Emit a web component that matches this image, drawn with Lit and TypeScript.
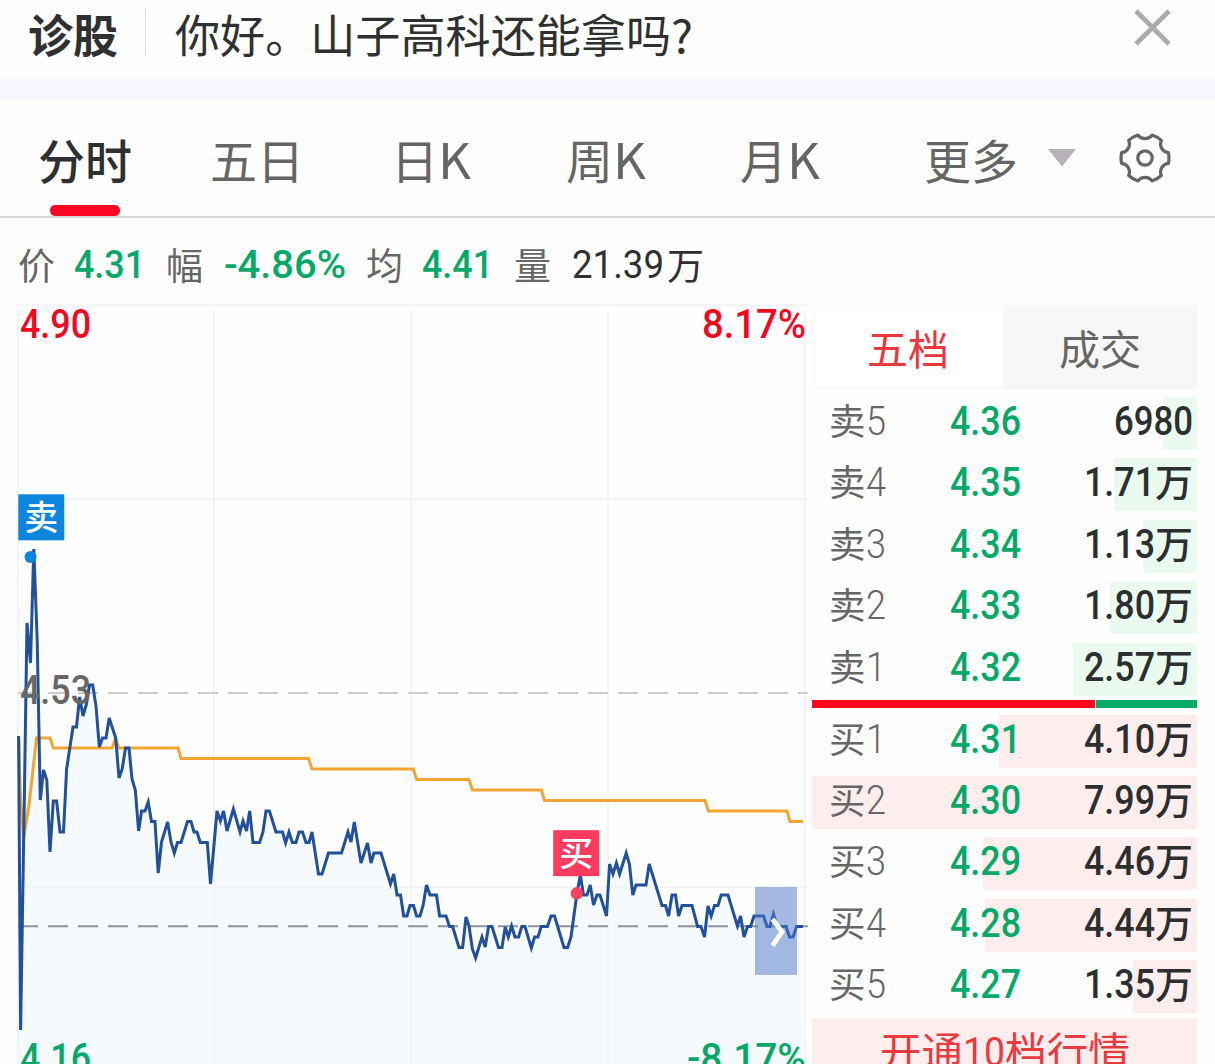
import { LitElement, html, svg, css, nothing } from "lit";
import { customElement, property } from "lit/decorators.js";

/** A single-line run of text fitted to an exact advance width. */
@customElement("fit-text")
class FitText extends LitElement {
  @property() text = "";
  @property({ type: Number }) width = 0;
  @property({ type: Number }) height = 53;
  @property({ type: Number }) base = 38;
  static styles = css`
    :host { display: block; flex: none; font-family: "Roboto", "Noto Sans CJK SC", sans-serif; }
    :host(.latin) { font-family: "Noto Sans CJK SC", sans-serif; }
    svg { display: block; overflow: visible; }
    text { fill: currentColor; white-space: pre; }
  `;
  render() {
    return html`<svg width=${this.width} height=${this.height}>
      <text x="0" y=${this.base} textLength=${this.width} lengthAdjust="spacingAndGlyphs">${this.text}</text>
    </svg>`;
  }
}

const PRICE: number[][] = [
  [18.6,736],[20.6,1030],[24.3,800],[27,623],[30.5,663],[33.8,549],[37.2,640],[40.3,800],[43.5,770],[46.8,780],[50,852],[53.3,801],[56.6,801],[60,832],[63.5,832],[66.6,769],[73,727],[76.5,727],[79.6,697],[83,716],[86.5,704],[89.5,685],[92.7,685],[96,706],[99.3,747],[102.5,738],[106,738],[109.2,718],[115.7,738],[119,778],[122.2,769],[125.5,748],[129,748],[132,779],[135.3,790],[138.6,831],[141.6,811],[145,811],[148.2,802],[151.5,821.5],[155,821.5],[158.2,873],[161.5,842],[167.6,822],[171,842],[174.3,853],[177.5,842.5],[181,842.5],[187.5,821.5],[191,821.5],[194,832],[197,832],[200.3,842.5],[207.3,842.5],[210.5,884],
  [217,811],[220.4,821],[223.6,811],[227,831],[233.4,809],[240,832],[243,821],[246.5,831],[249.7,811],[253,842.5],[259.6,842.5],[263,832],[266,811],[269.4,811],[276,832],[282.5,832],[285.6,843],[289,832],[292.3,842.5],[296,842.5],[299,832],[302.5,832],[306,842.5],[309,842.5],[312,832],[318.5,874],[322,874],[328.5,853],[341.5,853],[348,832],[351,842],[354.3,822],[361,863],[367.5,843],[371,863],[374,853],[381,853],[390.5,884],[393.7,874],[397,895],[400.5,895],[403.7,916],[407,916],[410,905.5],[413.5,905.5],[416.6,916],
  [420,916],[423.2,905],[426.5,885],[430,895],[436.5,895],[439.6,916],[446,916],[449.5,926.5],[452.6,926.5],[459,947.5],[462.6,947.5],[466,917],[469,926],[472.4,949],[475.6,958],[482,937],[485.2,947],[488.6,926.5],[492,926.5],[498.5,947.5],[502,947.5],[505.2,927],[508.3,937],[511.6,926],[515,937],[518.6,937],[521.8,926.5],[525,926.5],[531.3,948],[534.6,937],[538,937],[541.2,926.5],[547.5,926.5],[551,916],[554.5,916],[564,947.5],[567.6,947.5],[571,937],[577,893],[580.3,875],[583.5,895],[587,895],[590.2,885],[593.5,905],[597,895],[600,895],[606.5,916],
  [609.6,864],[613,874],[616.4,863],[619.6,874],[626.2,853],[629.4,864],[632.8,895],[636,885],[646,885],[649.2,864],[662,905.5],[665.5,905.5],[668.6,916],[672,895],[675.5,895],[678.6,916],[682,905.5],[692,905.5],[697.6,926.5],[701,926.5],[704.5,937],[708,906],[711.2,916],[714.5,905.5],[718,905.5],[721.2,895],[728,895],[737.4,926],[740.6,916],[744,937],[747.5,926.5],[750.6,926.5],[754,916],[763.5,916],[767,926.5],[770,926.5],[773.5,914],[777,926.5],[786,926.5],[789.5,937],[793,937],[796.6,926.5],[803,926.5],
];
const AVERAGE: number[][] = [
  [18.8,740],[20.5,800],[23.6,838],[29,805],[36.5,738],[50,738],[53.4,748],[112,748],[115.6,739],[119,748],[178,748],[181,758.5],[308.6,758.5],[312,769],[413.3,769],[416.6,779.5],[469,779.5],[472.4,790],[541.3,790],[544.5,800.5],[705,800.5],[708.4,811],[787,811],[790,821.5],[803,821.5],
];
const points = (list: number[][]) => list.map((p) => p.join(",")).join(" ");

@customElement("time-chart")
class TimeChart extends LitElement {
  static styles = css`
    :host { display: block; width: 812px; height: 759px; font-family: "Roboto", "Noto Sans CJK SC", sans-serif; }
    svg { display: block; overflow: visible; }
    .grid { stroke: #f4f4f6; stroke-width: 2; }
    .area { fill: #f5faff; }
    .avg { fill: none; stroke: #f2a532; stroke-width: 3; }
    .price { fill: none; stroke: #22509a; stroke-width: 3; }
    .dash { stroke-width: 2; stroke-dasharray: 20 10; }
    .close { stroke: #cccccc; }
    .now { stroke: #90949a; }
    .axis { font-size: 40.5px; font-weight: 500; }
    .up { fill: #f4071f; }
    .flat { fill: #666; }
    .down { fill: #05a868; }
    .mark { font-size: 34px; font-weight: 500; fill: #fff; text-anchor: middle; }
  `;
  render() {
    return html`<svg width="812" height="759" viewBox="0 305 812 759">
      <polygon class="area" points="${points(PRICE)} 803,1064 18,1064"></polygon>
      <g class="grid">
        ${[18, 214, 411, 608, 805].map((x) => svg`<line x1=${x} x2=${x} y1="311" y2="1064"></line>`)}
        ${[305.5, 499, 887].map((y) => svg`<line x1="18" x2="808" y1=${y} y2=${y}></line>`)}
      </g>
      <line class="dash close" x1="18" x2="808" y1="693" y2="693"></line>
      <polyline class="avg" points=${points(AVERAGE)}></polyline>
      <line class="dash now" x1="18" x2="808" y1="926.3" y2="926.3"></line>
      <polyline class="price" points=${points(PRICE)}></polyline>
      <text class="axis up" x="20" y="337.5" textLength="71" lengthAdjust="spacingAndGlyphs">4.90</text>
      <text class="axis up" x="702" y="337.5" textLength="104" lengthAdjust="spacingAndGlyphs">8.17%</text>
      <text class="axis flat" x="20" y="704" textLength="71" lengthAdjust="spacingAndGlyphs">4.53</text>
      <text class="axis down" x="20" y="1072" textLength="71" lengthAdjust="spacingAndGlyphs">4.16</text>
      <text class="axis down" x="687" y="1072" textLength="119" lengthAdjust="spacingAndGlyphs">-8.17%</text>
      <circle cx="30.5" cy="557" r="6" fill="#0b86dc"></circle>
      <rect x="18.3" y="494.3" width="46" height="46" fill="#0b86dc"></rect>
      <text class="mark" x="41.3" y="530">卖</text>
      <circle cx="576.8" cy="893.3" r="6.2" fill="#f9405f"></circle>
      <rect x="553.2" y="830.2" width="46" height="46" fill="#ff3b60"></rect>
      <text class="mark" x="576.2" y="866">买</text>
      <rect x="755" y="887" width="42" height="88" fill="rgb(76,117,198)" fill-opacity="0.5"></rect>
      <polyline points="772.5,919 782,932 772.5,945.5" fill="none" stroke="#fff" stroke-width="4.8"></polyline>
    </svg>`;
  }
}

interface Level { side: string; n: string; price: string; volume: string; bar: number; }
const SELL: Level[] = [
  { side: "卖", n: "5", price: "4.36", volume: "6980", bar: 34 },
  { side: "卖", n: "4", price: "4.35", volume: "1.71万", bar: 83 },
  { side: "卖", n: "3", price: "4.34", volume: "1.13万", bar: 54 },
  { side: "卖", n: "2", price: "4.33", volume: "1.80万", bar: 87 },
  { side: "卖", n: "1", price: "4.32", volume: "2.57万", bar: 124 },
];
const BUY: Level[] = [
  { side: "买", n: "1", price: "4.31", volume: "4.10万", bar: 198 },
  { side: "买", n: "2", price: "4.30", volume: "7.99万", bar: 385 },
  { side: "买", n: "3", price: "4.29", volume: "4.46万", bar: 214 },
  { side: "买", n: "4", price: "4.28", volume: "4.44万", bar: 212 },
  { side: "买", n: "5", price: "4.27", volume: "1.35万", bar: 64 },
];

@customElement("order-book")
class OrderBook extends LitElement {
  static styles = css`
    :host { display: block; width: 385px; height: 759px; overflow: hidden; }
    .tabs { display: grid; grid-template-columns: 191px 194px; height: 83.5px; box-sizing: border-box; font-size: 41px; }
    .tab { display: flex; justify-content: center; background: #f7f7f7; color: #666; }
    .tab.on { background: #fff; border: 1px solid #f6f6f6; border-right: 0; box-sizing: border-box; color: #e8383d; }
    .levels { display: flex; flex-direction: column; gap: 8.4px; }
    .sell { padding-top: 8.5px; }
    .buy { padding-top: 7px; }
    .level { height: 53px; display: flex; background-repeat: no-repeat; background-position: right top; }
    .sell .level { background-image: linear-gradient(#eafaee, #eafaee); }
    .buy .level { background-image: linear-gradient(#feeded, #feeded); }
    .side { font-size: 36.5px; color: #666; margin-left: 16.5px; }
    .n { font-size: 40px; font-weight: 350; color: #666; margin-left: 1px; width: 67px; }
    .price { font-size: 41px; font-weight: 500; color: #05a868; width: 72px; margin-left: 17px; }
    .volume { display: flex; flex: 1; justify-content: flex-end; padding-right: 4px; color: #2c2e2f; }
    .digits { font-size: 41px; font-weight: 500; }
    .unit { font-size: 38px; font-weight: 500; }
    .ratio { display: flex; gap: 1px; height: 8px; margin-top: 4px; }
    .bids { width: 283px; background: #ff0720; }
    .asks { flex: 1; background: #04ad67; }
    .more { display: flex; justify-content: center; height: 60px; margin-top: 4.5px; background: #feeded; color: #ea3a40; font-size: 41px; }
  `;
  level(l: Level) {
    const unit = l.volume.endsWith("万");
    return html`<div class="level" style="background-size:${l.bar}px 53px">
      <fit-text class="side" text=${l.side} .width=${36.5}></fit-text>
      <fit-text class="n" text=${l.n} .width=${20}></fit-text>
      <fit-text class="price" text=${l.price} .width=${71}></fit-text>
      <div class="volume">
        <fit-text class="digits" text=${unit ? l.volume.slice(0, -1) : l.volume} .width=${unit ? 71 : 79}></fit-text>
        ${unit ? html`<fit-text class="unit" text="万" .width=${38}></fit-text>` : nothing}
      </div>
    </div>`;
  }
  render() {
    return html`
      <div class="tabs">
        <div class="tab on"><fit-text text="五档" .width=${82} .base=${59}></fit-text></div>
        <div class="tab"><fit-text text="成交" .width=${82} .base=${60}></fit-text></div>
      </div>
      <div class="levels sell">${SELL.map((l) => this.level(l))}</div>
      <div class="ratio"><div class="bids"></div><div class="asks"></div></div>
      <div class="levels buy">${BUY.map((l) => this.level(l))}</div>
      <div class="more">
        <fit-text text="开通" .width=${83} .base=${49}></fit-text>
        <fit-text text="10" .width=${42} .base=${48}></fit-text>
        <fit-text text="档行情" .width=${125} .base=${49}></fit-text>
      </div>`;
  }
}

/** Six-lobed gear outline with concave notches between the lobes. */
const gearPath = (() => {
  const at = (deg: number) => {
    const a = (deg * Math.PI) / 180;
    return `${(26 + 24 * Math.cos(a)).toFixed(2)} ${(26 + 24 * Math.sin(a)).toFixed(2)}`;
  };
  let d = `M${at(-13)}`;
  for (let i = 0; i < 6; i++) {
    d += `A26 26 0 0 1 ${at(i * 60 + 13)}A8.6 8.6 0 0 0 ${at(i * 60 + 47)}`;
  }
  return d + "Z";
})();

@customElement("app-root")
class AppRoot extends LitElement {
  static styles = css`
    :host { display: block; width: 1215px; height: 1064px; overflow: hidden; background: #fefefe; color: #2f3031; }
    .ask { display: flex; height: 79px; box-sizing: border-box; padding-left: 28px; }
    .name { font-size: 45px; font-weight: 700; }
    .rule { width: 1px; height: 46px; margin: 9px 29px 0 27px; background: #dcdcdc; }
    .question { font-size: 45px; }
    .x { margin: 7px 42px 0 auto; }
    .band { height: 21px; background: #f6f7fe; }
    .tabs { display: grid; grid-template-columns: 172.5px 181px 175px 174px 183.5px 188px 1fr; height: 118px; box-sizing: border-box; padding-left: 37.5px; border-bottom: 2px solid #d8d8d8; font-size: 47px; color: #646664; }
    .tab { display: flex; }
    .on { flex-direction: column; color: #2f3031; font-weight: 500; }
    .latin { font-size: 49.5px; }
    .mark { width: 70px; height: 11px; border-radius: 5px; background: #ff0724; margin-left: 12.5px; }
    .caret { flex: none; margin: 49px 0 0 30px; }
    .gear { flex: none; margin: 32px 0 0 7.5px; }
    .stats { display: grid; grid-template-columns: 56px 92px 58px 142px 56px 92px 58px 95px 38px; height: 87px; padding-left: 18px; font-size: 37px; color: #666; }
    .num { font-size: 38.7px; font-weight: 500; color: #05a868; }
    .vol { color: #2f3031; font-weight: 400; }
    .body { display: flex; }
  `;
  cjk(text: string, width: number) {
    return html`<fit-text text=${text} .width=${width} .height=${105} .base=${79}></fit-text>`;
  }
  kLine(period: string) {
    return html`<div class="tab">${this.cjk(period, 47)}
      <fit-text class="latin" text="K" .width=${33} .height=${105} .base=${79}></fit-text></div>`;
  }
  render() {
    const stat = (text: string, width: number, cls = "") =>
      html`<fit-text class=${cls} text=${text} .width=${width} .base=${cls.includes("num") ? 60 : 61.5}></fit-text>`;
    return html`
      <div class="ask">
        <fit-text class="name" text="诊股" .width=${90} .base=${52.5}></fit-text>
        <div class="rule"></div>
        <fit-text class="question" text="你好。山子高科还能拿吗" .width=${496} .base=${52.5}></fit-text>
        <fit-text class="question latin" text="?" .width=${22} .base=${52.5} style="font-size:45px"></fit-text>
        <svg class="x" width="41" height="41" viewBox="0 0 41 41"><path d="M4 4L37 37M37 4L4 37" stroke="#ababab" stroke-width="4.6"></path></svg>
      </div>
      <div class="band"></div>
      <div class="tabs">
        <div class="tab on">${this.cjk("分时", 94)}<div class="mark"></div></div>
        <div class="tab">${this.cjk("五日", 94)}</div>
        ${this.kLine("日")}${this.kLine("周")}${this.kLine("月")}
        <div class="tab">${this.cjk("更多", 94)}<svg class="caret" width="28" height="18"><path d="M0 0H28L14 17.5Z" fill="#b6b1b7"></path></svg></div>
        <div class="tab"><svg class="gear" width="52" height="52" viewBox="0 0 52 52" fill="none" stroke="#646664" stroke-width="3.2" stroke-linejoin="round"><path d=${gearPath}></path><circle cx="26" cy="26" r="7.2"></circle></svg></div>
      </div>
      <div class="stats">
        ${stat("价", 37)}${stat("4.31", 71, "num")}
        ${stat("幅", 37)}${stat("-4.86%", 122, "num")}
        ${stat("均", 37)}${stat("4.41", 71, "num")}
        ${stat("量", 37)}${stat("21.39", 92, "num vol")}${stat("万", 37, "vol")}
      </div>
      <div class="body"><time-chart></time-chart><order-book></order-book></div>`;
  }
}
